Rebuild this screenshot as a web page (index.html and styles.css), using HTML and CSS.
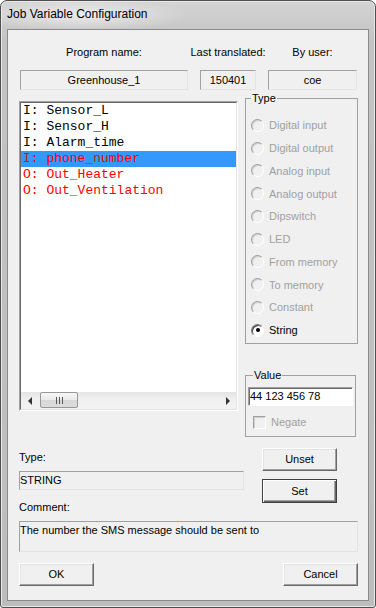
FILE: index.html
```html
<!DOCTYPE html>
<html lang='en'>
<head>
    <meta charset='UTF-8'>
    <meta name='viewport' content='width=device-width, initial-scale=1.0'>
    <title>Job Variable Configuration</title>
    <link rel="stylesheet" href="styles.css">
</head>
<body>
    <div class='window'>
        <div class='titlebar'>Job Variable Configuration</div>
        <div class='client'>
            <div class='header'>
                <span class='head_label'>Program name:</span>
                <span class='head_label'>Last translated:</span>
                <span class='head_label'>By user:</span>
                <div class='static head_field'>Greenhouse_1</div>
                <div class='static head_field'>150401</div>
                <div class='static head_field'>coe</div>
            </div>

            <div class='main'>
                <div class='listbox'>
                    <div class='list_inner'>
                        <ul class='items'>
                            <li>I: Sensor_L</li>
                            <li>I: Sensor_H</li>
                            <li>I: Alarm_time</li>
                            <li class='out selected'>I: phone_number</li>
                            <li class='out'>O: Out_Heater</li>
                            <li class='out'>O: Out_Ventilation</li>
                        </ul>
                        <div class='hscroll'>
                            <div class='arrow_btn'><span class='arrow_left'></span></div>
                            <div class='track'>
                                <div class='thumb'><span class='grip'></span></div>
                            </div>
                            <div class='arrow_btn'><span class='arrow_right'></span></div>
                        </div>
                    </div>
                </div>

                <div class='side'>
                    <fieldset class='group type_group'>
                        <legend>Type</legend>
                        <div class='option disabled'><span class='radio'></span>Digital input</div>
                        <div class='option disabled'><span class='radio'></span>Digital output</div>
                        <div class='option disabled'><span class='radio'></span>Analog input</div>
                        <div class='option disabled'><span class='radio'></span>Analog output</div>
                        <div class='option disabled'><span class='radio'></span>Dipswitch</div>
                        <div class='option disabled'><span class='radio'></span>LED</div>
                        <div class='option disabled'><span class='radio'></span>From memory</div>
                        <div class='option disabled'><span class='radio'></span>To memory</div>
                        <div class='option disabled'><span class='radio'></span>Constant</div>
                        <div class='option'><span class='radio checked'></span>String</div>
                    </fieldset>

                    <fieldset class='group value_group'>
                        <legend>Value</legend>
                        <div class='edit'>44 123 456 78</div>
                        <div class='check disabled'><span class='check_box'></span>Negate</div>
                    </fieldset>
                </div>
            </div>

            <div class='details'>
                <div class='details_left'>
                    <div class='caption'>Type:</div>
                    <div class='static type_field'>STRING</div>
                    <div class='caption comment_caption'>Comment:</div>
                </div>
                <div class='details_right'>
                    <button class='button'>Unset</button>
                    <button class='button default'>Set</button>
                </div>
            </div>

            <div class='static comment'>The number the SMS message should be sent to</div>

            <div class='footer'>
                <button class='button'>OK</button>
                <button class='button'>Cancel</button>
            </div>
        </div>
    </div>
</body>
</html>
```

FILE: styles.css
```css
body
{
    margin: 0;
    font-family: 'Liberation Sans', Arial, sans-serif;
    font-size: 11px;
    color: #000;
    background: #fff;
}
.window
{
    box-sizing: border-box;
    width: 376px;
    height: 608px;
    display: flex;
    flex-direction: column;
    border: 1px solid #4f4f4f;
    border-radius: 7px 7px 3px 3px;
    background: linear-gradient(#d4d4d4, #c3c3c3 40px, #bdbdbd);
    box-shadow: inset 0 0 0 1px #e9e9e9;
}
.titlebar
{
    box-sizing: border-box;
    height: 28px;
    padding: 5px 0 0 6px;
    font-size: 12px;
    line-height: 16px;
    border-radius: 6px 6px 0 0;
    background: radial-gradient(ellipse 110px 16px at 80px 14px, rgba(255, 255, 255, 0.6), rgba(255, 255, 255, 0));
}
.client
{
    flex: 1;
    box-sizing: border-box;
    margin: 0 6px 6px 6px;
    padding: 16px 10px 0 11px;
    border: 1px solid #8a8a8a;
    background: #f0f0f0;
}
.static
{
    box-sizing: border-box;
    border: 1px solid;
    border-color: #a0a0a0 #e3e3e3 #e3e3e3 #a0a0a0;
    line-height: 17px;
}

/* header */
.header
{
    display: grid;
    grid-template-columns: 168px 56px 89px;
    column-gap: 12px;
    row-gap: 11px;
    margin-left: 1px;
    text-align: center;
    line-height: 13px;
}
.head_label
{
    justify-self: center;
    white-space: nowrap;
}
.head_field
{
    height: 20px;
    line-height: 18px;
}

/* list + type */
.main
{
    display: flex;
    align-items: flex-start;
    margin-top: 2px;
}
.listbox
{
    box-sizing: border-box;
    width: 219px;
    height: 310px;
    margin-top: 9px;
    border: 1px solid;
    border-color: #a0a0a0 #fff #fff #a0a0a0;
}
.list_inner
{
    box-sizing: border-box;
    height: 100%;
    display: flex;
    flex-direction: column;
    border: 1px solid;
    border-color: #696969 #e3e3e3 #e3e3e3 #696969;
    background: #fff;
}
.items
{
    flex: 1;
    margin: 0;
    padding: 0;
    list-style: none;
    font-family: 'Liberation Mono', 'Courier New', monospace;
    font-size: 13px;
    line-height: 16px;
}
.items li
{
    padding-left: 2px;
    white-space: pre;
}
.items .out
{
    color: #ff0000;
}
.items .selected
{
    background: #3399ff;
}
.hscroll
{
    display: flex;
    height: 17px;
    background: linear-gradient(#e4e4e4, #efefef 40%, #f2f2f2);
}
.arrow_btn
{
    width: 17px;
    display: flex;
    align-items: center;
    justify-content: center;
}
.arrow_left
{
    border-right: 4px solid #333;
    border-top: 4px solid transparent;
    border-bottom: 4px solid transparent;
}
.arrow_right
{
    border-left: 4px solid #333;
    border-top: 4px solid transparent;
    border-bottom: 4px solid transparent;
}
.track
{
    flex: 1;
}
.thumb
{
    box-sizing: border-box;
    width: 38px;
    height: 16px;
    margin: 0 0 0 2px;
    display: flex;
    align-items: center;
    justify-content: center;
    border: 1px solid #979797;
    border-radius: 2px;
    background: linear-gradient(#f6f6f6, #e9e9e9 50%, #d8d8d8 51%, #dcdcdc);
}
.grip
{
    width: 7px;
    height: 7px;
    background: repeating-linear-gradient(to right, #555 0 1px, transparent 1px 3px);
}
.side
{
    margin-left: 7px;
}
.group
{
    box-sizing: border-box;
    margin: 0;
    min-inline-size: 0;
    border: 1px solid #a0a0a0;
}
.group legend
{
    padding: 0 1px;
    line-height: 13px;
}
.type_group
{
    width: 113px;
    padding: 9px 0 1px 5px;
}
.option
{
    display: flex;
    align-items: center;
    height: 22.75px;
}
.disabled
{
    color: #a0a0a0;
}
.radio
{
    flex: none;
    box-sizing: border-box;
    width: 13px;
    height: 13px;
    margin-right: 5px;
    display: flex;
    align-items: center;
    justify-content: center;
    border: 1px solid;
    border-color: #a0a0a0 #fff #fff #a0a0a0;
    border-radius: 50%;
    box-shadow: inset 1px 1px 0 #d0d0d0;
}
.radio.checked
{
    border-color: #7a7a7a #fff #fff #7a7a7a;
    box-shadow: inset 1px 1px 0 #404040;
    background: #fff;
}
.radio.checked::after
{
    content: '';
    width: 4px;
    height: 4px;
    border-radius: 50%;
    background: #000;
}
.value_group
{
    width: 111px;
    margin-top: 25px;
    padding: 5px 2px 6px 2px;
}
.value_group legend
{
    margin-left: 5px;
}
.edit
{
    box-sizing: border-box;
    height: 19px;
    padding-left: 1px;
    line-height: 17px;
    border: 1px solid;
    border-color: #a0a0a0 #fff #fff #a0a0a0;
    box-shadow: inset 1px 1px 0 #696969;
    background: #fff;
}
.check
{
    display: flex;
    align-items: center;
    height: 15px;
    margin-top: 9px;
    padding-left: 5px;
}
.check_box
{
    box-sizing: border-box;
    width: 13px;
    height: 13px;
    margin-right: 5px;
    border: 1px solid;
    border-color: #a0a0a0 #fff #fff #a0a0a0;
    box-shadow: inset 1px 1px 0 #d0d0d0;
}

/* type / comment */
.details
{
    display: flex;
    margin-top: 11px;
}
.details_left
{
    width: 225px;
    padding-top: 3px;
}
.caption
{
    line-height: 13px;
}
.type_field
{
    height: 19px;
    margin-top: 7px;
}
.comment_caption
{
    margin-top: 11px;
}
.details_right
{
    margin-left: 18px;
}
.button
{
    display: block;
    box-sizing: border-box;
    width: 75px;
    height: 23px;
    padding: 0;
    font: inherit;
    color: #000;
    background: #f0f0f0;
    border: 1px solid;
    border-color: #fff #696969 #696969 #fff;
    box-shadow: inset -1px -1px 0 #a0a0a0, inset 1px 1px 0 #e3e3e3;
}
.button.default
{
    height: 24px;
    margin-top: 8px;
    border-color: #404040;
    box-shadow: inset 1px 1px 0 #fff, inset -1px -1px 0 #696969, inset -2px -2px 0 #a0a0a0;
}
.comment
{
    height: 31px;
    margin-top: 7px;
    padding-top: 2px;
    line-height: 13px;
}
.footer
{
    display: flex;
    justify-content: space-between;
    margin-top: 11px;
}
```
